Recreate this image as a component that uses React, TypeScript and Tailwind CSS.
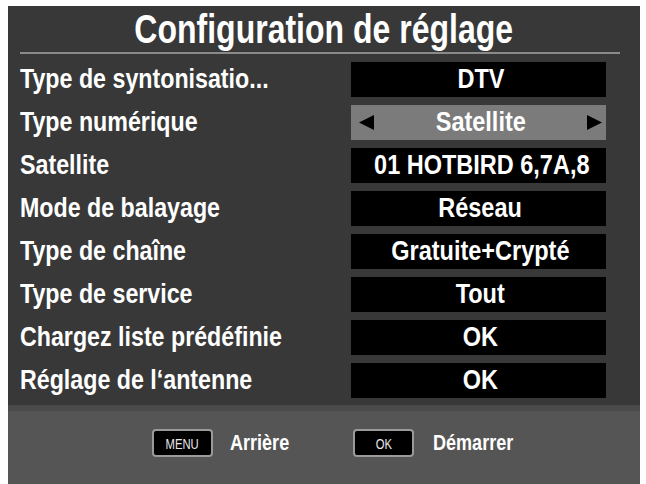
import React from 'react';

const rows: { label: string; value: string; selected?: boolean }[] = [
  { label: 'Type de syntonisatio...', value: 'DTV' },
  { label: 'Type numérique', value: 'Satellite', selected: true },
  { label: 'Satellite', value: '01 HOTBIRD 6,7A,8' },
  { label: 'Mode de balayage', value: 'Réseau' },
  { label: 'Type de chaîne', value: 'Gratuite+Crypté' },
  { label: 'Type de service', value: 'Tout' },
  { label: 'Chargez liste prédéfinie', value: 'OK' },
  { label: 'Réglage de l‘antenne', value: 'OK' },
];

const font = { fontFamily: '"Liberation Sans", Arial, sans-serif' };

const KeyCap = ({ label }: { label: string }) => (
  <div className="w-[61px] h-[28px] rounded-[4px] bg-black border-2 border-[#9a9a9a] flex items-center justify-center">
    <span className="text-[15px] leading-none text-[#e8e8e8] font-normal scale-x-[0.75] inline-block">{label}</span>
  </div>
);

export default function App() {
  return (
    <div className="w-[646px] h-[484px] bg-white pt-[6px] pl-[8px] overflow-hidden" style={font}>
      <div className="w-[632px] h-[478px] flex flex-col">
        {/* Main panel */}
        <div className="h-[399px] bg-[#383838] flex flex-col">
          <div className="h-[46px] flex items-end justify-center pb-[3px]">
            <span className="inline-block text-white font-bold text-[40px] leading-none scale-x-[0.8] whitespace-nowrap">
              Configuration de réglage
            </span>
          </div>
          <div className="h-[2px] bg-[#8a8a8a] ml-[12px] mr-[20px]" />
          <div className="flex flex-col gap-[8px] mt-[8px] pl-[12px] pr-[34px]">
            {rows.map((r, i) => (
              <div key={i} className="h-[35px] flex items-center justify-between">
                <span className="inline-block origin-left scale-x-[0.86] whitespace-nowrap text-white font-bold text-[27px] leading-none">
                  {r.label}
                </span>
                <div
                  className={`w-[255px] h-[35px] flex items-center justify-between pl-[7px] pr-[3px] ${
                    r.selected ? 'bg-[#7b7b7b]' : 'bg-black'
                  }`}
                >
                  <span className="w-[17px] flex justify-start">
                    {r.selected && (
                      <svg width="17" height="17" viewBox="0 0 17 17">
                        <polygon points="16,1 16,16 1,8.5" fill="#000" />
                      </svg>
                    )}
                  </span>
                  <span className="inline-block scale-x-[0.87] whitespace-nowrap text-white font-bold text-[27px] leading-none">
                    {r.value}
                  </span>
                  <span className="w-[17px] flex justify-end">
                    {r.selected && (
                      <svg width="17" height="17" viewBox="0 0 17 17">
                        <polygon points="1,1 1,16 16,8.5" fill="#000" />
                      </svg>
                    )}
                  </span>
                </div>
              </div>
            ))}
          </div>
        </div>
        {/* Footer */}
        <div className="flex-1 bg-[#555555] border-t-[6px] border-[#4a4a4a] flex items-start pt-[18px] pl-[144px]">
          <div className="w-[201px] flex items-center">
            <KeyCap label="MENU" />
            <span className="ml-[17px] inline-block origin-left scale-x-[0.82] text-white font-bold text-[22px] leading-none">Arrière</span>
          </div>
          <div className="flex items-center">
            <KeyCap label="OK" />
            <span className="ml-[19px] inline-block origin-left scale-x-[0.82] text-white font-bold text-[22px] leading-none">Démarrer</span>
          </div>
        </div>
      </div>
    </div>
  );
}
